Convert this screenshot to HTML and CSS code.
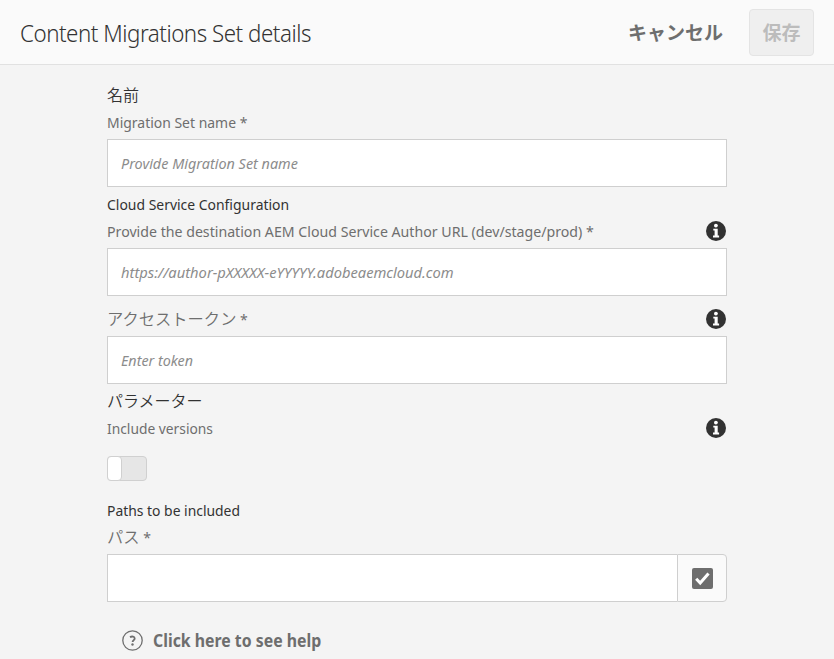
FILE: index.html
```html
<!DOCTYPE html>
<html lang="ja">
<head>
<meta charset="utf-8">
<title>Content Migrations Set details</title>
<link rel="stylesheet" href="styles.css">
</head>
<body>
<svg class="sprite" aria-hidden="true">
  <symbol id="info" viewBox="0 0 20 20">
    <circle cx="10" cy="10" r="10" fill="#323232"/>
    <circle cx="9.9" cy="4.6" r="1.9" fill="#fff"/>
    <path d="M7.3 7.8h4.4v6.8h1.4v1.8H7v-1.8h1.6v-5H7.3z" fill="#fff"/>
  </symbol>
</svg>
<header class="bar">
  <h1 class="title"><span class="t-title">Content Migrations Set details</span></h1>
  <button class="btn cancel">キャンセル</button>
  <button class="btn save" disabled>保存</button>
</header>
<main class="form">
  <section class="section">
    <h2 class="heading ja">名前</h2>
    <div class="label"><span class="t-name">Migration Set name *</span></div>
    <div class="field"><span class="p-name">Provide Migration Set name</span></div>
  </section>
  <section class="section cloud">
    <h2 class="heading"><span class="t-cloud">Cloud Service Configuration</span></h2>
    <div class="label"><span class="t-url">Provide the destination AEM Cloud Service Author URL (dev/stage/prod) *</span><svg class="info"><use href="#info"/></svg></div>
    <div class="field"><span class="p-url">https://author-pXXXXX-eYYYYY.adobeaemcloud.com</span></div>
    <div class="label token"><span class="kana">アクセストークン<small class="star"> *</small></span><svg class="info"><use href="#info"/></svg></div>
    <div class="field"><span class="p-token">Enter token</span></div>
  </section>
  <section class="section params">
    <h2 class="heading ja">パラメーター</h2>
    <div class="label"><span class="t-versions">Include versions</span><svg class="info"><use href="#info"/></svg></div>
    <div class="switch"><i class="knob"></i></div>
  </section>
  <section class="section paths">
    <h2 class="heading"><span class="t-paths">Paths to be included</span></h2>
    <div class="label"><span class="kana">パス<small class="star"> *</small></span></div>
    <div class="picker">
      <div class="field"></div>
      <button class="pick" aria-label="選択">
        <svg width="21" height="21" viewBox="0 0 21 21"><rect width="21" height="21" rx="2" fill="#6e6e6e"/><path d="M4.2 10.8l4 4.2 8.3-9.6" fill="none" stroke="#fff" stroke-width="3"/></svg>
      </button>
    </div>
  </section>
  <a class="help">
    <svg width="21" height="21" viewBox="0 0 21 21" fill="none" stroke="#6e6e6e"><circle cx="10.5" cy="10.5" r="9.7" stroke-width="1.3"/><path d="M8 7.1c2-1.1 4.7-.7 4.7 1.3 0 1.6-2.1 1.8-2.1 3.7" stroke-width="1.8"/><circle cx="10.5" cy="14.5" r="1.2" fill="#6e6e6e" stroke="none"/></svg>
    <span class="t-help">Click here to see help</span>
  </a>
</main>
</body>
</html>
```
FILE: styles.css
```css
* { box-sizing: border-box; }
body {
  margin: 0;
  height: 659px;
  overflow: hidden;
  background: #f4f4f4;
  color: #323232;
  font: 15px/27px "Noto Sans", "Noto Sans CJK JP", sans-serif;
}
.sprite { display: none; }
[class^="t-"], [class^="p-"] { display: inline-block; transform-origin: 0 50%; }
.t-title { transform: scaleX(.93); }
.t-name { transform: scaleX(.93); }
.t-cloud { transform: scaleX(.929); }
.t-url { transform: scaleX(.944); }
.t-versions { transform: scaleX(.92); }
.t-paths { transform: scaleX(.926); }
.t-help { transform: scaleX(.88); }
.p-name { transform: scaleX(.96); }
.p-url { transform: scaleX(.98); }
.p-token { transform: scaleX(.955); }
.bar {
  display: flex;
  align-items: center;
  height: 65px;
  padding: 0 20px;
  background: #fafafa;
  border-bottom: 1px solid #e1e1e1;
}
.title {
  flex: 1;
  margin: 0;
  padding-top: 1px;
  font-size: 24px;
  font-weight: 300;
  letter-spacing: -0.5px;
  white-space: nowrap;
}
.btn {
  height: 47px;
  padding: 0 0 2px;
  border: 0;
  background: none;
  color: #6e6e6e;
  font: bold 19px "Noto Sans CJK JP", sans-serif;
  white-space: nowrap;
}
.cancel { margin-right: 26px; }
.save {
  width: 65px;
  border: 1px solid #e4e4e4;
  border-radius: 4px;
  background: #efefef;
  color: #bcbcbc;
}
.form { width: 620px; margin: 17px 0 0 107px; }
.heading { margin: 0; height: 27px; font-size: 15px; font-weight: 400; white-space: nowrap; }
.ja { font-size: 16px; font-weight: 350; }
.label {
  display: flex;
  justify-content: space-between;
  height: 30px;
  color: #6e6e6e;
  white-space: nowrap;
}
.kana { font-family: "Noto Sans CJK JP", sans-serif; font-size: 16.3px; font-weight: 350; line-height: 25px; }
.star { font: 400 14px/1 "Noto Sans", sans-serif; }
.info { flex: none; width: 20px; height: 20px; margin: 3px 1px 0 0; }
.field {
  height: 48px;
  padding: 0 13px;
  border: 1px solid #cfcfcf;
  background: #fff;
  color: #8c8c8c;
  font-style: italic;
  line-height: 47px;
  white-space: nowrap;
}
.cloud { padding-top: 4px; }
.token { height: 30px; margin-top: 10px; }
.params { padding-top: 4px; }
.switch {
  width: 40px;
  height: 25px;
  margin-top: 11px;
  border: 1px solid #d0d0d0;
  border-radius: 4px;
  background: #e6e6e6;
}
.knob {
  display: block;
  width: 15px;
  height: 25px;
  margin: -1px 0 0 -1px;
  border: 1px solid #d0d0d0;
  border-radius: 4px;
  background: #fff;
}
.paths { padding-top: 16px; }
.picker { display: flex; }
.picker .field { flex: 1; border-right: 0; }
.pick {
  display: flex;
  align-items: center;
  justify-content: center;
  width: 50px;
  padding: 1px 0 0;
  border: 1px solid #cfcfcf;
  border-radius: 0 4px 4px 0;
  background: #fafafa;
}
.help {
  display: flex;
  align-items: center;
  gap: 10px;
  margin: 25px 0 0 15px;
  color: #6e6e6e;
  font-size: 18px;
  font-weight: 700;
  white-space: nowrap;
}
```
